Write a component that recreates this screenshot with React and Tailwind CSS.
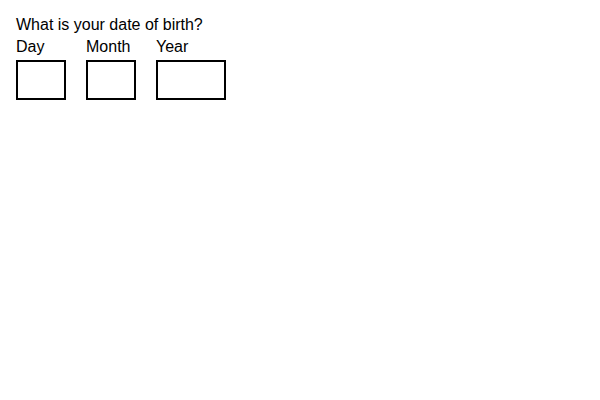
import React from "react";

const Field = ({ label, width }) => (
  <div className="flex flex-col">
    <label className="leading-[normal]">{label}</label>
    <input type="text" className={`${width} h-[40px] mt-[4px] border-2 border-black bg-white outline-none`} />
  </div>
);

export default function App() {
  return (
    <div className="min-h-screen bg-white p-4 pt-[16px] text-black font-['Liberation_Sans',Arial,sans-serif] text-base">
      <div className="leading-[normal] mb-1">What is your date of birth?</div>
      <div className="flex gap-5">
        <Field label="Day" width="w-[50px]" />
        <Field label="Month" width="w-[50px]" />
        <Field label="Year" width="w-[70px]" />
      </div>
    </div>
  );
}
